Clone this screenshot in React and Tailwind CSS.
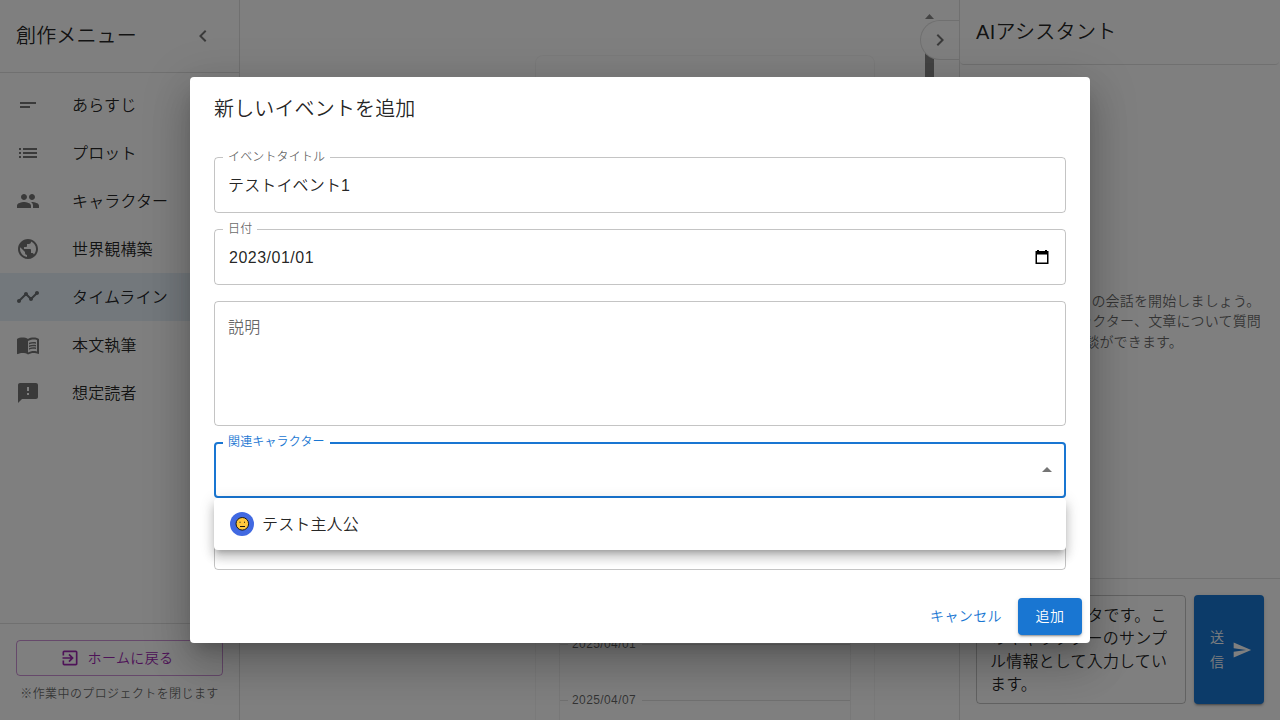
import React from "react";
import {
  MdShortText, MdList, MdPeople, MdPublic, MdTimeline, MdFeedback,
  MdChevronLeft, MdChevronRight, MdExitToApp, MdSend, MdArrowDropUp,
} from "react-icons/md";

function BookIcon({ className }) {
  return (
    <svg className={className} viewBox="0 0 24 24" fill="currentColor">
      <path d="M21 5c-1.11-.35-2.33-.5-3.5-.5-1.95 0-4.05.4-5.5 1.5-1.45-1.1-3.55-1.5-5.5-1.5S2.45 4.9 1 6v14.65c0 .25.25.5.5.5.1 0 .15-.05.25-.05C3.1 20.45 5.05 20 6.5 20c1.95 0 4.05.4 5.5 1.5 1.35-.85 3.8-1.5 5.5-1.5 1.65 0 3.35.3 4.75 1.05.1.05.15.05.25.05.25 0 .5-.25.5-.5V6c-.6-.45-1.25-.75-2-1zm0 13.5c-1.1-.35-2.3-.5-3.5-.5-1.7 0-4.15.65-5.5 1.5V8c1.35-.85 3.8-1.5 5.5-1.5 1.2 0 2.4.15 3.5.5v11.5z" />
      <path d="M17.5 10.5c.88 0 1.73.09 2.5.26V9.24c-.79-.15-1.64-.24-2.5-.24-1.7 0-3.24.29-4.5.83v1.66c1.13-.64 2.7-.99 4.5-.99zM13 12.49v1.66c1.13-.64 2.7-.99 4.5-.99.88 0 1.73.09 2.5.26V11.9c-.79-.15-1.64-.24-2.5-.24-1.7 0-3.24.3-4.5.83zm4.5 1.84c-1.7 0-3.24.29-4.5.83v1.66c1.13-.64 2.7-.99 4.5-.99.88 0 1.73.09 2.5.26v-1.52c-.79-.16-1.64-.24-2.5-.24z" />
    </svg>
  );
}

const menu = [
  ["あらすじ", MdShortText],
  ["プロット", MdList],
  ["キャラクター", MdPeople],
  ["世界観構築", MdPublic],
  ["タイムライン", MdTimeline],
  ["本文執筆", BookIcon],
  ["想定読者", MdFeedback],
];

function Sidebar() {
  return (
    <aside className="flex w-60 shrink-0 flex-col border-r border-black/12">
      <div className="flex h-[73px] items-center justify-between border-b border-black/12 pr-6 pl-4">
        <h2 className="text-[20px] leading-8 tracking-[0.15px]">創作メニュー</h2>
        <MdChevronLeft className="size-6 text-black/54" />
      </div>
      <ul className="flex-1 pt-2">
        {menu.map(([label, Icon]) => (
          <li
            key={label}
            className={
              "flex h-12 items-center px-4 " + (label === "タイムライン" ? "bg-[#e6f1f8]" : "")
            }
          >
            <Icon className="size-6 text-black/54" />
            <span className="ml-8 pt-0.5 text-base tracking-[0.15px]">{label}</span>
          </li>
        ))}
      </ul>
      <div className="h-[97px] border-t border-black/12 px-4 pt-4">
        <button className="flex h-9 w-full items-center justify-center gap-2 rounded border border-[#9c27b0]/50 text-sm tracking-[0.4px] text-[#9c27b0]">
          <MdExitToApp className="-ml-1.5 size-5" />
          ホームに戻る
        </button>
        <p className="mt-2 text-center text-xs leading-5 tracking-[0.4px] whitespace-nowrap text-black/60">
          ※作業中のプロジェクトを閉じます
        </p>
      </div>
    </aside>
  );
}

function DateDivider({ children }) {
  return (
    <div className="flex h-5 items-center text-xs tracking-[0.4px] text-black/60">
      <span className="h-px w-2 bg-black/12" />
      <span className="pr-[6px] pl-1">{children}</span>
      <span className="h-px flex-1 bg-black/12" />
    </div>
  );
}

function Timeline() {
  return (
    <main className="relative flex min-w-0 flex-1 pl-[295px]">
      <section className="mt-[55px] w-[340px] rounded-t-lg border border-b-0 border-black/4 px-[23px]">
        <div className="mt-12 flex h-full flex-col gap-9 border-x border-black/6 pt-[530px]">
          <DateDivider>2025/04/01</DateDivider>
          <DateDivider>2025/04/07</DateDivider>
        </div>
      </section>
      <div className="mr-[25px] ml-auto flex w-[9px] flex-col items-center pt-[14px]">
        <svg className="h-[5px] w-[9px] shrink-0" viewBox="0 0 9 5">
          <path d="M0 5 4.5 0 9 5Z" fill="#888" />
        </svg>
        <div className="mt-[31px] h-[300px] w-full bg-[#868686]" />
      </div>
      <button className="absolute top-5 right-0 flex h-10 w-[39px] items-center justify-center rounded-l-full border border-r-0 border-black/12 bg-white">
        <MdChevronRight className="size-6 text-black/54" />
      </button>
    </main>
  );
}

function Assistant() {
  return (
    <aside className="flex w-[321px] shrink-0 flex-col border-l border-black/12">
      <h2 className="mr-px h-[65px] rounded-b border-b border-black/12 pt-4 pl-4 text-[20px] leading-8 tracking-[0.3px]">
        AIアシスタント
      </h2>
      <div className="flex flex-1 flex-col justify-center text-center text-sm leading-[20.4px] tracking-[0.15px] text-black/60">
        <p>AIアシスタントとの会話を開始しましょう。</p>
        <p>プロットやキャラクター、文章について質問</p>
        <p>や相談ができます。</p>
      </div>
      <div className="flex h-[142px] gap-2 border-t border-black/12 p-4">
        <div className="h-[109px] w-[210px] rounded border border-black/23 px-[13px] pt-[8px] text-base leading-[23px] tracking-[0.2px]">
          テスト用データです。このキャラクターのサンプル情報として入力しています。
        </div>
        <button className="flex h-[109px] w-[70px] items-center gap-2 rounded bg-[#1976d2] pl-4 text-sm leading-[24.5px] tracking-[0.4px] text-white shadow-[0_3px_1px_-2px_rgba(0,0,0,.2),0_2px_2px_rgba(0,0,0,.14),0_1px_5px_rgba(0,0,0,.12)]">
          <span className="w-[14.4px]">送信</span>
          <MdSend className="size-5 shrink-0" />
        </button>
      </div>
    </aside>
  );
}

function Field({ label, focused, className, children }) {
  return (
    <div
      className={
        "relative flex items-center rounded text-base tracking-[0.15px] " +
        (focused ? "border-2 border-[#1976d2] px-3 " : "border border-black/23 px-[13px] ") +
        className
      }
    >
      {label && (
        <span
          className={
            "absolute bg-white px-[5px] text-xs leading-4 " +
            (focused ? "-top-[10px] left-[7px] text-[#1976d2]" : "-top-[9px] left-[8px] text-black/60")
          }
        >
          {label}
        </span>
      )}
      {children}
    </div>
  );
}

function EventDialog() {
  return (
    <div role="dialog" className="flex h-[566px] w-[900px] flex-col rounded bg-white shadow-[0_11px_15px_-7px_rgba(0,0,0,.2),0_24px_38px_3px_rgba(0,0,0,.14),0_9px_46px_8px_rgba(0,0,0,.12)]">
      <h2 className="px-6 pt-4 text-[20px] leading-8 tracking-[0.15px]">新しいイベントを追加</h2>
      <div className="flex flex-col gap-4 px-6 pt-8">
        <Field label="イベントタイトル" className="h-14">
          <span className="pt-0.5">テストイベント1</span>
        </Field>
        <Field label="日付" className="h-14 justify-between">
          <span className="pt-0.5 pl-px tracking-[0.5px]">2023/01/01</span>
          <svg className="mr-0.5 size-4" viewBox="0 0 16 16">
            <path d="M3 1h2v1h6V1h2v1h1.5v13h-13V2H3ZM3 5.5v8h10v-8Z" fill="#000" fillRule="evenodd" />
          </svg>
        </Field>
        <Field className="h-[125px] items-start pt-[14px]">
          <span className="leading-6 text-black/60">説明</span>
        </Field>
        <div className="relative">
          <Field label="関連キャラクター" focused className="h-14 justify-end">
            <MdArrowDropUp className="-mr-[7px] size-6 text-black/54" />
          </Field>
          <div className="absolute inset-x-0 top-full z-10 flex h-[52px] items-center gap-2 rounded bg-white px-4 shadow-[0_5px_5px_-3px_rgba(0,0,0,.2),0_8px_10px_1px_rgba(0,0,0,.14),0_3px_14px_2px_rgba(0,0,0,.12)]">
            <svg className="size-6" viewBox="0 0 24 24">
              <circle cx="12" cy="12" r="12" fill="#4169e1" />
              <circle cx="12.3" cy="11.8" r="6.3" fill="#ffc83d" stroke="#151515" />
              <path d="M9.5 10.2h1M14 10.2h1M10 14.5h5" stroke="#151515" strokeWidth="1.1" />
            </svg>
            <span className="pt-0.5 text-base tracking-[0.15px]">テスト主人公</span>
          </div>
        </div>
        <Field className="h-14" />
      </div>
      <div className="mt-auto flex justify-end gap-2 p-2 text-sm tracking-[0.4px]">
        <button className="h-[37px] px-2 pb-0.5 text-[#1976d2]">キャンセル</button>
        <button className="h-[37px] w-16 rounded bg-[#1976d2] pb-0.5 text-white shadow-[0_3px_1px_-2px_rgba(0,0,0,.2),0_2px_2px_rgba(0,0,0,.14),0_1px_5px_rgba(0,0,0,.12)]">
          追加
        </button>
      </div>
    </div>
  );
}

export default function App() {
  return (
    <div className="relative h-[720px] w-[1280px] overflow-hidden bg-white font-['Liberation_Sans','Noto_Sans_CJK_JP',sans-serif] font-[350] text-black/87">
      <div className="flex h-full">
        <Sidebar />
        <Timeline />
        <Assistant />
      </div>
      <div className="absolute inset-0 flex items-center justify-center bg-black/50">
        <EventDialog />
      </div>
    </div>
  );
}
